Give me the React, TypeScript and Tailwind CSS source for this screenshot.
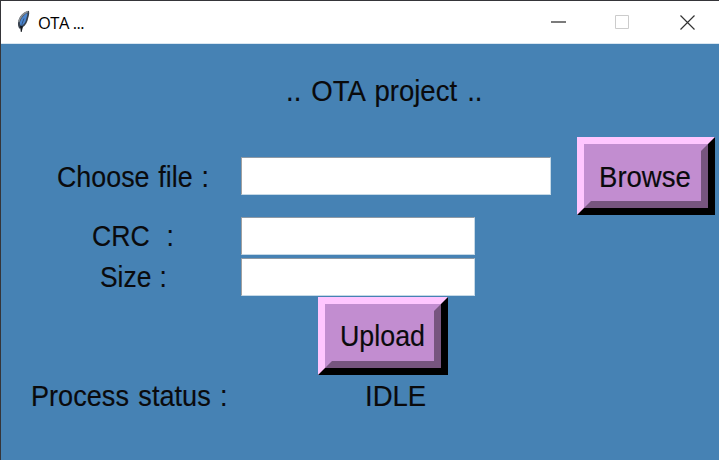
import React from 'react';

type TextProps = { children: React.ReactNode; className?: string };

function Label({ children, className = '' }: TextProps) {
  return (
    <span
      className={`block w-max shrink-0 origin-left whitespace-pre text-[29px] leading-8 text-[#0a0a0c] [-webkit-text-stroke:0.15px_#0a0a0c] ${className}`}
    >
      {children}
    </span>
  );
}

function Entry({ className }: { className: string }) {
  return (
    <input
      className={`block h-[38px] shrink-0 rounded-none border border-t-[#8f9aa5] border-r-[#c5d9e7] border-b-[#c5d9e7] border-l-[#a0a0a0] bg-white outline-none ${className}`}
    />
  );
}

function RaisedButton({ children, className = '' }: TextProps) {
  return (
    <button
      className={`block shrink-0 border-7 border-t-[#ffc6ff] border-r-black border-b-black border-l-[#ffc6ff] ${className}`}
    >
      <span className="flex h-full items-center border-7 border-t-[#c28dd0] border-r-[#77557f] border-b-[#77557f] border-l-[#c28dd0] bg-[#c28dd0] text-left">
        {children}
      </span>
    </button>
  );
}

function Feather() {
  return (
    <svg className="ml-[14px] h-6 w-4" viewBox="0 0 16 24" fill="none">
      <path d="M14 .8C9 1.500 4.500 6 3.200 11.500C2.700 14 3 17 4.500 18.800C8.500 17.500 11.500 14.500 12.600 10.500C13.300 7.500 14.800 4 14 .8Z" fill="#37414d" />
      <path d="M12.200 3C8.500 5 5.600 9 4.800 13L5.800 16.800C9 14.500 10.700 12 11.200 9C11.600 6.500 13 4.500 12.200 3Z" fill="#4b86d0" />
      <path d="M13 1.500C8 3.500 5 7 3.700 12" stroke="#8a8f94" strokeWidth="1.500" />
      <path d="M9 8.500C7.500 12 6.700 15 6.300 18" stroke="#29456b" strokeWidth=".8" />
      <path d="M5 15.500L8 16.500L6.600 22L5.800 22Z" fill="#15191f" />
    </svg>
  );
}

export default function App() {
  return (
    <div className="flex h-[460px] w-[719px] flex-col overflow-hidden border-t border-l border-[#353539] bg-[#4682b4] font-['Liberation_Sans',Arial,sans-serif]">
      <header className="flex h-[43px] shrink-0 items-center border-b border-[#d9e6f0] bg-white">
        <Feather />
        <span className="ml-[7px] pt-px font-['Open_Sans',sans-serif] text-[16.5px] leading-6 tracking-[-0.5px] text-black">OTA ...</span>
        <div className="ml-auto flex items-center pr-[24px]">
          <svg className="h-[15px] w-[15px]" viewBox="0 0 15 15" stroke="#333" fill="none">
            <path d="M0 7H15" strokeWidth="1.300" />
          </svg>
          <svg className="ml-[49px] h-[15px] w-[15px]" viewBox="0 0 15 15" stroke="#cccccc" fill="none">
            <path d="M.5 .5H13.500V13.500H.5Z" />
          </svg>
          <svg className="ml-[50px] h-[15px] w-[15px]" viewBox="0 0 15 15" stroke="#333" fill="none">
            <path d="M.5 .5L14.500 14.500M14.500 .5L.5 14.500" strokeWidth="1.200" />
          </svg>
        </div>
      </header>
      <main className="flex flex-1 flex-col">
        <div className="h-[93px] pt-[31px] pl-[285px]">
          <Label className="scale-x-[0.95] [word-spacing:2.5px]">.. OTA project ..</Label>
        </div>
        <div className="flex h-[79px]">
          <div className="w-[240px] shrink-0 pt-[24px] pl-[56px]">
            <Label className="scale-x-[0.925] [word-spacing:1.5px]">Choose file :</Label>
          </div>
          <Entry className="mt-[20px] w-[310px]" />
          <RaisedButton className="ml-[26px] h-[78px] w-[138px]">
            <Label className="mt-px ml-[8px] scale-x-[0.95]">Browse</Label>
          </RaisedButton>
        </div>
        <div className="flex h-[41px]">
          <div className="w-[240px] shrink-0 pt-[4px] pl-[91px]">
            <Label className="scale-x-[0.92] [word-spacing:1px]">CRC  :</Label>
          </div>
          <Entry className="mt-px w-[234px]" />
        </div>
        <div className="flex h-[40px]">
          <div className="w-[240px] shrink-0 pt-[4px] pl-[99px]">
            <Label className="scale-x-[0.91] [word-spacing:1px]">Size :</Label>
          </div>
          <Entry className="mt-px w-[234px]" />
        </div>
        <RaisedButton className="ml-[317px] h-[78px] w-[130px]">
          <Label className="ml-[8px] scale-x-[0.925]">Upload</Label>
        </RaisedButton>
        <div className="flex pt-[5px]">
          <div className="w-[364px] shrink-0 pl-[30px]">
            <Label className="scale-x-[0.935] [word-spacing:2px]">Process status :</Label>
          </div>
          <Label className="scale-x-[0.95]">IDLE</Label>
        </div>
      </main>
    </div>
  );
}
